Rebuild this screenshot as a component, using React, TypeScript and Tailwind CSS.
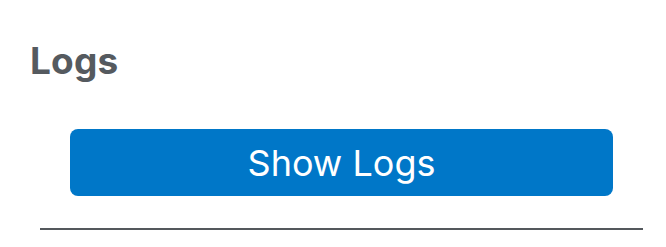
export default function App() {
  return (
    <div className="w-[666px] h-[247px] bg-white overflow-hidden" style={{ fontFamily: 'Inter, "Liberation Sans", sans-serif' }}>
      <div className="pt-[41px] pl-[30px]">
        <h1 className="text-[37px] leading-[40px] font-bold tracking-[0.2px] text-[#555a5f]">Logs</h1>
      </div>
      <div className="mt-[48px] ml-[70px] w-[543px]">
        <button className="w-full h-[67px] rounded-[8px] bg-[#0077c8] text-white text-[36px] leading-none flex items-center justify-center">
          Show Logs
        </button>
      </div>
      <div className="mt-[32px] ml-[40px] w-[603px] h-[2px] bg-[#54585c]" />
    </div>
  );
}
